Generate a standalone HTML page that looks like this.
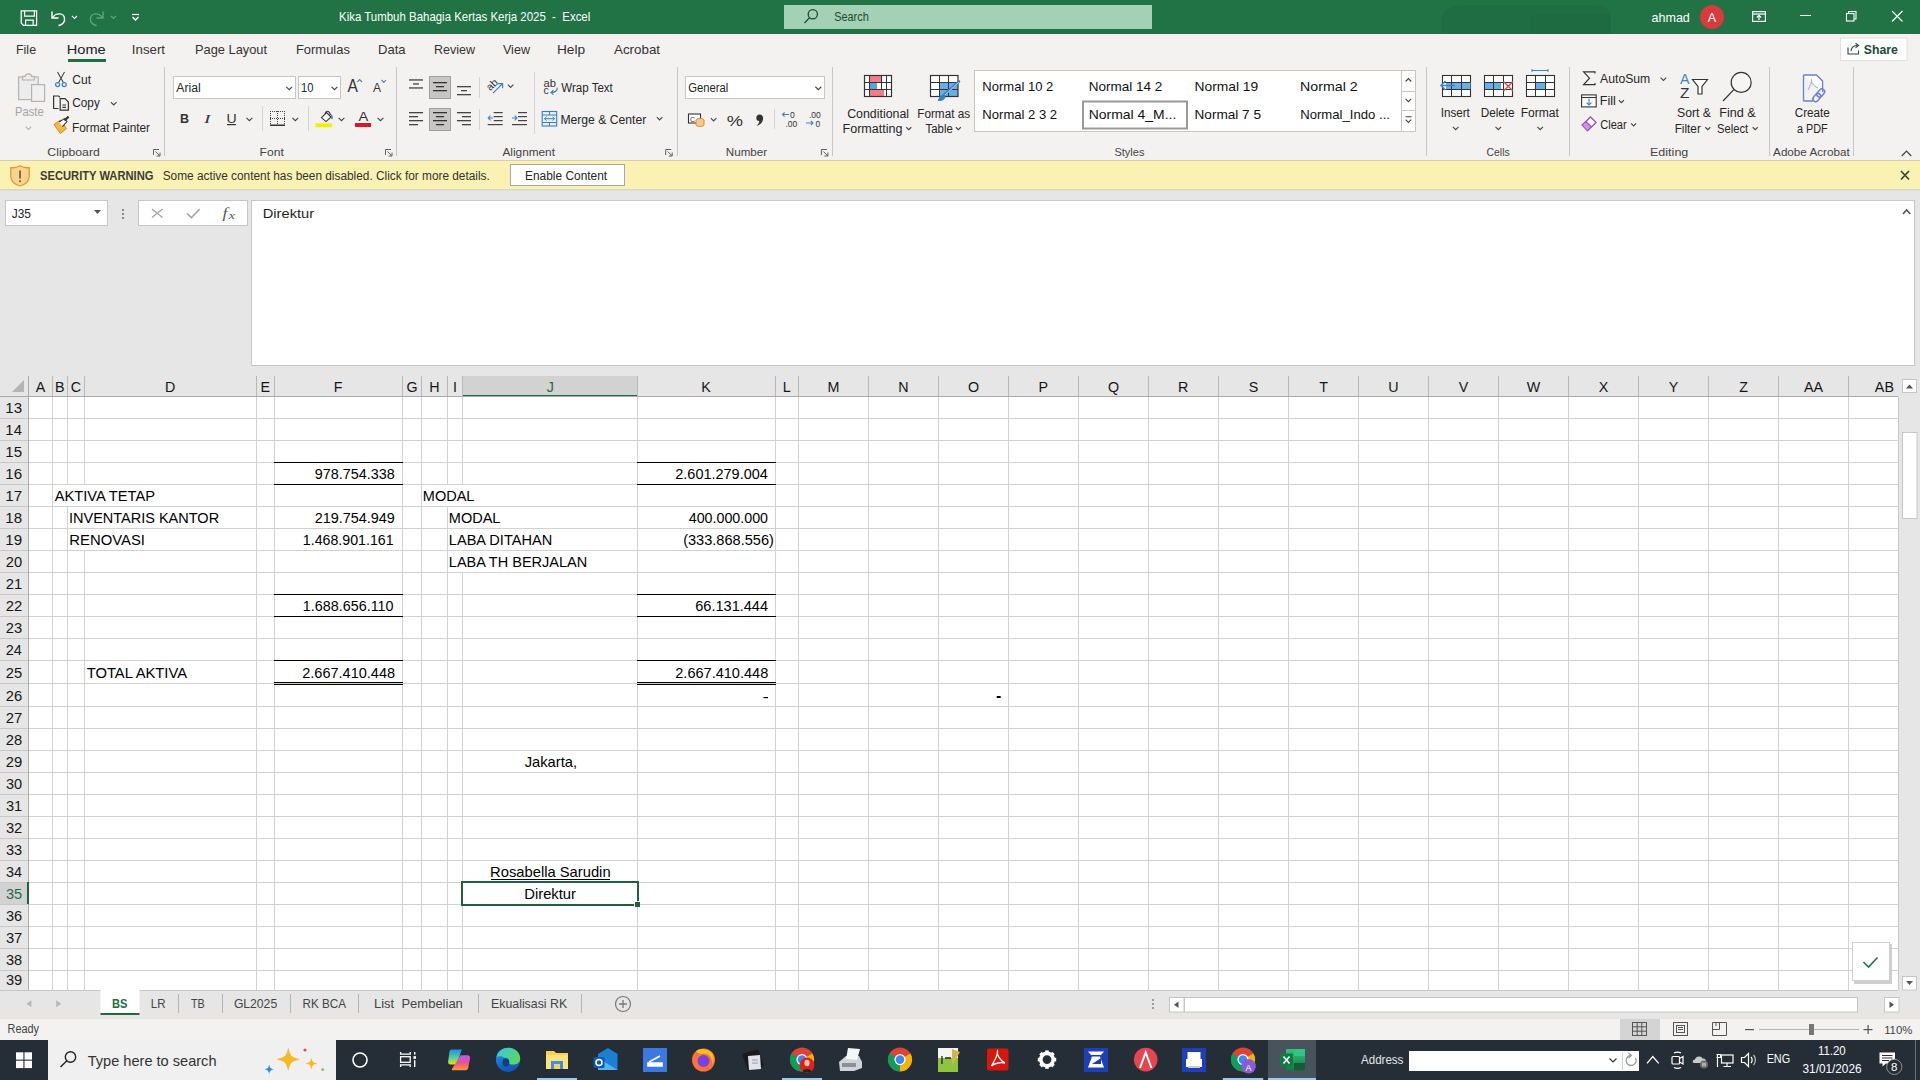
<!DOCTYPE html>
<html><head><meta charset="utf-8"><title>Excel</title>
<style>html,body{margin:0;padding:0;width:1920px;height:1080px;overflow:hidden;background:#fff}svg{display:block}text{white-space:pre}</style>
</head><body>
<svg width="1920" height="1080" viewBox="0 0 1920 1080">
<rect x="0" y="0" width="1920" height="34" fill="#217346" />
<rect x="0" y="34" width="1920" height="126" fill="#f3f2f1" />
<rect x="0" y="160" width="1920" height="29" fill="#faf2b2" />
<rect x="0" y="189" width="1920" height="187" fill="#e6e6e6" />
<g fill="none" stroke="#fff" stroke-width="1.25"><path d="M21.2 10.8 H36.6 V25.3 H23.4 L21.2 23.1 Z"/><path d="M24.6 10.8 V16.2 H34.4 V10.8"/><path d="M25.6 25.3 V20.1 H33.2 V25.3"/></g>
<g fill="none" stroke="#fff" stroke-width="1.4" stroke-linecap="round"><path d="M52 12 V18 H58"/><path d="M52.5 17.5 C56 12.5 64 12.5 64.5 18.5 C65 22 62 24.5 59 25.5"/></g>
<path d="M72 16 L74.5 18.5 L77 16" fill="none" stroke="#fff" stroke-width="1.2"/>
<g fill="none" stroke="#5fa37c" stroke-width="1.4" stroke-linecap="round"><path d="M103 12 V18 H97"/><path d="M102.5 17.5 C99 12.5 91 12.5 90.5 18.5 C90 22 93 24.5 96 25.5"/></g>
<path d="M111 16 L113.5 18.5 L116 16" fill="none" stroke="#5fa37c" stroke-width="1.2"/>
<path d="M132 14.5 H139" stroke="#fff" stroke-width="1.2"/><path d="M132.5 17 L135.5 20 L138.5 17" fill="none" stroke="#fff" stroke-width="1.3"/>
<text x="339.08" y="20.5" fill="#ffffff" style="font-family:'Liberation Sans',sans-serif;font-size:13.5px" textLength="251.18" lengthAdjust="spacingAndGlyphs">Kika Tumbuh Bahagia Kertas Kerja 2025  -  Excel</text>
<rect x="784" y="5" width="368" height="24" fill="#a2d1b5" />
<g fill="none" stroke="#1d4a30" stroke-width="1.3"><circle cx="812.8" cy="14.2" r="4.6"/><path d="M809.6 17.6 L804.5 23"/></g>
<text x="834.21" y="20.8" fill="#1d4a30" style="font-family:'Liberation Sans',sans-serif;font-size:13.3px" textLength="34.54" lengthAdjust="spacingAndGlyphs">Search</text>
<text x="1651.50" y="22" fill="#ffffff" style="font-family:'Liberation Sans',sans-serif;font-size:13.5px" textLength="38.35" lengthAdjust="spacingAndGlyphs">ahmad</text>
<circle cx="1712" cy="17" r="12" fill="#d83b3b"/>
<text x="1707.84" y="22" fill="#ffffff" style="font-family:'Liberation Sans',sans-serif;font-size:12.5px">A</text>
<g fill="none" stroke="#fff" stroke-width="1.2"><rect x="1752.6" y="11.6" width="12.8" height="9.8"/><path d="M1752.6 14 H1765.4"/><path d="M1759 20 V15.5 M1756.8 17.5 L1759 15.3 L1761.2 17.5"/></g>
<rect x="1800" y="15" width="11" height="1" fill="#ffffff" />
<g fill="none" stroke="#fff" stroke-width="1.1"><rect x="1846.5" y="13.5" width="7.5" height="7.5"/><path d="M1848.5 13.5 V11.5 H1856 V19 H1854"/></g>
<path d="M1892 11 L1902.5 21.5 M1902.5 11 L1892 21.5" stroke="#fff" stroke-width="1.2"/>
<path d="M1441 34 V22 C1441 10 1450 5 1464 5 H1598 C1606 5 1611 10 1611 18 V34 Z" fill="#000" fill-opacity="0.035"/>
<path d="M1530 34 V20 C1530 16 1533 14 1537 14 H1611 V34 Z" fill="#000" fill-opacity="0.025"/>
<text x="16.00" y="54" fill="#333333" style="font-family:'Liberation Sans',sans-serif;font-size:12.8px" textLength="20.07" lengthAdjust="spacingAndGlyphs">File</text>
<text x="66.83" y="54" fill="#202020" style="font-family:'Liberation Sans',sans-serif;font-size:12.8px" textLength="38.86" lengthAdjust="spacingAndGlyphs">Home</text>
<text x="131.80" y="54" fill="#333333" style="font-family:'Liberation Sans',sans-serif;font-size:12.8px" textLength="33.28" lengthAdjust="spacingAndGlyphs">Insert</text>
<text x="194.97" y="54" fill="#333333" style="font-family:'Liberation Sans',sans-serif;font-size:12.8px" textLength="72.10" lengthAdjust="spacingAndGlyphs">Page Layout</text>
<text x="295.96" y="54" fill="#333333" style="font-family:'Liberation Sans',sans-serif;font-size:12.8px" textLength="53.96" lengthAdjust="spacingAndGlyphs">Formulas</text>
<text x="377.96" y="54" fill="#333333" style="font-family:'Liberation Sans',sans-serif;font-size:12.8px" textLength="27.57" lengthAdjust="spacingAndGlyphs">Data</text>
<text x="434.00" y="54" fill="#333333" style="font-family:'Liberation Sans',sans-serif;font-size:12.8px" textLength="40.99" lengthAdjust="spacingAndGlyphs">Review</text>
<text x="502.94" y="54" fill="#333333" style="font-family:'Liberation Sans',sans-serif;font-size:12.8px" textLength="27.06" lengthAdjust="spacingAndGlyphs">View</text>
<text x="556.90" y="54" fill="#333333" style="font-family:'Liberation Sans',sans-serif;font-size:12.8px" textLength="28.17" lengthAdjust="spacingAndGlyphs">Help</text>
<text x="614.00" y="54" fill="#333333" style="font-family:'Liberation Sans',sans-serif;font-size:12.8px" textLength="46.09" lengthAdjust="spacingAndGlyphs">Acrobat</text>
<rect x="68" y="59" width="38" height="3" fill="#1e6e42" />
<rect x="1840.5" y="38" width="66.5" height="22.5" fill="#fdfdfd" stroke="#e1dfdd" stroke-width="1"/>
<g fill="none" stroke="#2b4a3c" stroke-width="1.1"><path d="M1848 47.5 V54 H1858.5 V50.5"/><path d="M1851 51 C1851.5 47 1854 45.5 1857.5 45.5"/><path d="M1855.5 43.3 L1858.6 45.5 L1855.5 47.8"/></g>
<text x="1863.83" y="53.7" fill="#234a3b" style="font-family:'Liberation Sans',sans-serif;font-size:12.6px;font-weight:700" textLength="34.13" lengthAdjust="spacingAndGlyphs">Share</text>
<rect x="164" y="67" width="1" height="89" fill="#c8c6c4" />
<rect x="396" y="67" width="1" height="89" fill="#c8c6c4" />
<rect x="677" y="67" width="1" height="89" fill="#c8c6c4" />
<rect x="832" y="67" width="1" height="89" fill="#c8c6c4" />
<rect x="1426" y="67" width="1" height="89" fill="#c8c6c4" />
<rect x="1569" y="67" width="1" height="89" fill="#c8c6c4" />
<rect x="1769" y="67" width="1" height="89" fill="#c8c6c4" />
<rect x="1853" y="67" width="1" height="89" fill="#c8c6c4" />
<g stroke="#b3b3b3" stroke-width="1.2" fill="#ececec"><rect x="18.6" y="77" width="19.6" height="22.6"/><path d="M22.6 80 V76.4 H25.2 C25.6 73 31.2 73 31.6 76.4 H34.2 V80 Z"/><rect x="31.6" y="84.6" width="13" height="16.8" fill="#f0f0f0"/></g>
<text x="15.00" y="116.4" fill="#a6a6a6" style="font-family:'Liberation Sans',sans-serif;font-size:12.3px" textLength="28.73" lengthAdjust="spacingAndGlyphs">Paste</text>
<path d="M25.60 126.60 L28.40 129.40 L31.20 126.60" fill="none" stroke="#b0b0b0" stroke-width="1.1"/>
<g fill="none" stroke="#444" stroke-width="1.1"><path d="M57.5 72 L63.4 82.5 M64.5 72 L58.6 82.5"/></g><g fill="none" stroke="#3a87c8" stroke-width="1.3"><circle cx="57.6" cy="84.6" r="2"/><circle cx="64.2" cy="84.6" r="2"/></g>
<text x="72.30" y="83.6" fill="#262626" style="font-family:'Liberation Sans',sans-serif;font-size:12.3px" textLength="18.67" lengthAdjust="spacingAndGlyphs">Cut</text>
<g fill="none" stroke="#333" stroke-width="1.2"><path d="M58.5 108.5 H53.6 V96 H58.6 L60 97.4"/><path d="M60.2 98.6 H65 L68.4 102 V110.2 H60.2 Z"/><path d="M62.4 105 H66 M62.4 107.4 H66"/></g>
<text x="72.31" y="107.4" fill="#262626" style="font-family:'Liberation Sans',sans-serif;font-size:12.3px" textLength="27.48" lengthAdjust="spacingAndGlyphs">Copy</text>
<path d="M110.90 102.10 L113.70 104.90 L116.50 102.10" fill="none" stroke="#444" stroke-width="1.1"/>
<path d="M54 124.6 L60.5 120 L66.5 128.5 L60.4 133.6 Z" fill="#f2b84a" stroke="#d48a1a" stroke-width="1"/><path d="M59 122 L64.5 118.6 L67 121.5 L62.4 126.6" fill="#fff" stroke="#333" stroke-width="1.1"/><path d="M64.5 120.5 L68.6 116.6" stroke="#333" stroke-width="2.2"/>
<text x="71.96" y="131.6" fill="#262626" style="font-family:'Liberation Sans',sans-serif;font-size:12.3px" textLength="78.06" lengthAdjust="spacingAndGlyphs">Format Painter</text>
<text x="47.39" y="156" fill="#444444" style="font-family:'Liberation Sans',sans-serif;font-size:11.8px" textLength="52.41" lengthAdjust="spacingAndGlyphs">Clipboard</text>
<g fill="none" stroke="#605e5c" stroke-width="1"><path d="M153.5 155 V149.5 H159"/><path d="M155.5 151.5 L160 156 M160 152.5 V156 H156.5"/></g>
<rect x="173.5" y="76.5" width="122" height="22" fill="#ffffff" stroke="#c8c6c4" stroke-width="1"/>
<text x="176.30" y="92" fill="#262626" style="font-family:'Liberation Sans',sans-serif;font-size:12.3px" textLength="24.40" lengthAdjust="spacingAndGlyphs">Arial</text>
<path d="M286.30 86.85 L289.20 89.75 L292.10 86.85" fill="none" stroke="#444" stroke-width="1.1"/>
<rect x="298.5" y="76.5" width="42" height="22" fill="#ffffff" stroke="#c8c6c4" stroke-width="1"/>
<text x="300.96" y="92" fill="#262626" style="font-family:'Liberation Sans',sans-serif;font-size:12.3px" textLength="12.46" lengthAdjust="spacingAndGlyphs">10</text>
<path d="M331.60 86.85 L334.50 89.75 L337.40 86.85" fill="none" stroke="#444" stroke-width="1.1"/>
<text x="347.40" y="91.7" fill="#333" style="font-family:'Liberation Sans',sans-serif;font-size:17.5px" textLength="10.43" lengthAdjust="spacingAndGlyphs">A</text>
<path d="M357.3 82 L359.6 79.6 L362 82" fill="none" stroke="#3a87c8" stroke-width="1.1"/>
<text x="373.00" y="91.7" fill="#333" style="font-family:'Liberation Sans',sans-serif;font-size:13.3px" textLength="8.02" lengthAdjust="spacingAndGlyphs">A</text>
<path d="M381.5 80 L383.8 82.4 L386 80" fill="none" stroke="#3a87c8" stroke-width="1.1"/>
<text x="179.89" y="123" fill="#333" style="font-family:'Liberation Sans',sans-serif;font-size:13.5px;font-weight:700" textLength="9.00" lengthAdjust="spacingAndGlyphs">B</text>
<text x="204.10" y="123" fill="#333" style="font-family:'Liberation Serif',serif;font-size:13.5px;font-style:italic" textLength="6.48" lengthAdjust="spacingAndGlyphs">I</text>
<text x="226.55" y="123" fill="#333" style="font-family:'Liberation Sans',sans-serif;font-size:12.5px" textLength="10.14" lengthAdjust="spacingAndGlyphs">U</text>
<rect x="227" y="124" width="9" height="1.2" fill="#333" />
<path d="M246.50 117.85 L249.40 120.75 L252.30 117.85" fill="none" stroke="#444" stroke-width="1.1"/>
<rect x="262" y="106" width="1" height="25" fill="#d6d4d2" />
<g stroke="#444" stroke-width="1" stroke-dasharray="1 1" fill="none" shape-rendering="crispEdges"><path d="M270 111.5 H285 M270.5 111 V125 M284.5 111 V125 M277.5 111 V125 M270 118.5 H285"/></g>
<rect x="270" y="124.5" width="15" height="1.5" fill="#333" />
<path d="M292.40 117.85 L295.30 120.75 L298.20 117.85" fill="none" stroke="#444" stroke-width="1.1"/>
<rect x="308" y="106" width="1" height="25" fill="#d6d4d2" />
<path d="M321.5 117.6 L326.6 112.5 L331 117 L326 121.6 Z" fill="#fff" stroke="#333" stroke-width="1.1"/><path d="M325 113.6 C326 110.5 328.5 110.5 329.8 113 L330.5 115" fill="none" stroke="#333" stroke-width="1.1"/><path d="M331 114.5 C332.6 116.5 332.5 118 331.5 119" fill="none" stroke="#2f6fb5" stroke-width="1.2"/>
<rect x="315.5" y="123.3" width="16.5" height="4" fill="#f0f000" />
<path d="M338.60 117.85 L341.50 120.75 L344.40 117.85" fill="none" stroke="#444" stroke-width="1.1"/>
<text x="358.40" y="121" fill="#333" style="font-family:'Liberation Sans',sans-serif;font-size:13px" textLength="9.83" lengthAdjust="spacingAndGlyphs">A</text>
<rect x="355" y="123" width="16" height="4" fill="#d71920" />
<path d="M377.60 117.85 L380.50 120.75 L383.40 117.85" fill="none" stroke="#444" stroke-width="1.1"/>
<text x="259.53" y="156" fill="#444444" style="font-family:'Liberation Sans',sans-serif;font-size:11.8px" textLength="24.24" lengthAdjust="spacingAndGlyphs">Font</text>
<g fill="none" stroke="#605e5c" stroke-width="1"><path d="M385.5 155 V149.5 H391"/><path d="M387.5 151.5 L392 156 M392 152.5 V156 H388.5"/></g>
<rect x="409" y="79.3" width="14" height="1.3" fill="#444" />
<rect x="413" y="83.3" width="6" height="1.3" fill="#444" />
<rect x="409" y="87.3" width="14" height="1.3" fill="#444" />
<rect x="429.5" y="76.5" width="21" height="22" fill="#c8c6c4" stroke="#a19f9d" stroke-width="1"/>
<rect x="433" y="82" width="14" height="1.3" fill="#333" />
<rect x="436" y="86" width="8" height="1.3" fill="#333" />
<rect x="433" y="90" width="14" height="1.3" fill="#333" />
<rect x="457" y="86" width="14" height="1.3" fill="#444" />
<rect x="461" y="90" width="6" height="1.3" fill="#444" />
<rect x="457" y="94" width="14" height="1.3" fill="#444" />
<rect x="409" y="112" width="14" height="1.3" fill="#444" />
<rect x="409" y="116" width="9" height="1.3" fill="#444" />
<rect x="409" y="120" width="14" height="1.3" fill="#444" />
<rect x="409" y="124" width="9" height="1.3" fill="#444" />
<rect x="429.5" y="108.5" width="21" height="22" fill="#c8c6c4" stroke="#a19f9d" stroke-width="1"/>
<rect x="433" y="112" width="14" height="1.3" fill="#333" />
<rect x="436" y="116" width="8" height="1.3" fill="#333" />
<rect x="433" y="120" width="14" height="1.3" fill="#333" />
<rect x="436" y="124" width="8" height="1.3" fill="#333" />
<rect x="457" y="112" width="14" height="1.3" fill="#444" />
<rect x="462" y="116" width="9" height="1.3" fill="#444" />
<rect x="457" y="120" width="14" height="1.3" fill="#444" />
<rect x="462" y="124" width="9" height="1.3" fill="#444" />
<rect x="479" y="77" width="1" height="21" fill="#d6d4d2" />
<rect x="479" y="109" width="1" height="21" fill="#d6d4d2" />
<text transform="translate(490.3 91.3) rotate(-45)" style="font-family:'Liberation Sans';font-size:10.5px" fill="#333">ab</text><path d="M493 93.2 L502.6 83.6 M498 83.6 H502.6 V88.2" fill="none" stroke="#3a7fc0" stroke-width="1.2"/>
<path d="M507.85 84.62 L510.60 87.38 L513.35 84.62" fill="none" stroke="#444" stroke-width="1.1"/>
<rect x="493.7" y="112" width="9" height="1.2" fill="#444" />
<rect x="493.7" y="116" width="9" height="1.2" fill="#444" />
<rect x="493.7" y="120" width="9" height="1.2" fill="#444" />
<rect x="487.7" y="124" width="15" height="1.2" fill="#444" />
<path d="M493.2 118 H488.2 M490.5 115.6 L488.2 118 L490.5 120.4" fill="none" stroke="#3a87c8" stroke-width="1.1"/>
<rect x="518" y="112" width="9" height="1.2" fill="#444" />
<rect x="518" y="116" width="9" height="1.2" fill="#444" />
<rect x="518" y="120" width="9" height="1.2" fill="#444" />
<rect x="512" y="124" width="15" height="1.2" fill="#444" />
<path d="M512 118 H517 M514.7 115.6 L517 118 L514.7 120.4" fill="none" stroke="#3a87c8" stroke-width="1.1"/>
<rect x="534" y="72" width="1" height="62" fill="#d6d4d2" />
<text x="543.6" y="86.6" style="font-family:'Liberation Sans';font-size:10.5px" fill="#333" textLength="12.4" lengthAdjust="spacingAndGlyphs">ab</text><text x="543.6" y="93.8" style="font-family:'Liberation Sans';font-size:10.5px" fill="#333">c</text><path d="M557.2 87.6 C557.6 91 555 92.6 551.2 92.4 M553.4 90.2 L551 92.4 L553.4 94.6" fill="none" stroke="#3a7fc0" stroke-width="1.2"/>
<text x="561.34" y="91.9" fill="#262626" style="font-family:'Liberation Sans',sans-serif;font-size:12.3px" textLength="51.47" lengthAdjust="spacingAndGlyphs">Wrap Text</text>
<g fill="#e8f1fa" stroke="#3a7fc0" stroke-width="1.1"><rect x="542.2" y="111.5" width="14.5" height="14.5"/></g><path d="M542.2 115 H556.7 M542.2 122.5 H556.7 M549.5 111.5 V115 M549.5 122.5 V126" stroke="#3a7fc0" stroke-width="1"/><path d="M544.5 118.7 H554.5 M546.5 116.8 L544.5 118.7 L546.5 120.6 M552.5 116.8 L554.5 118.7 L552.5 120.6" fill="none" stroke="#3a7fc0" stroke-width="1"/>
<text x="560.43" y="123.7" fill="#262626" style="font-family:'Liberation Sans',sans-serif;font-size:12.3px" textLength="85.80" lengthAdjust="spacingAndGlyphs">Merge &amp; Center</text>
<path d="M656.85 117.12 L659.60 119.88 L662.35 117.12" fill="none" stroke="#444" stroke-width="1.1"/>
<text x="502.50" y="156" fill="#444444" style="font-family:'Liberation Sans',sans-serif;font-size:11.8px">Alignment</text>
<g fill="none" stroke="#605e5c" stroke-width="1"><path d="M665.7 155 V149.5 H671.2"/><path d="M667.7 151.5 L672.2 156 M672.2 152.5 V156 H668.7"/></g>
<rect x="685.5" y="76.5" width="139" height="22" fill="#ffffff" stroke="#c8c6c4" stroke-width="1"/>
<text x="688.14" y="91.8" fill="#262626" style="font-family:'Liberation Sans',sans-serif;font-size:12.3px" textLength="40.13" lengthAdjust="spacingAndGlyphs">General</text>
<path d="M815.40 86.75 L818.30 89.65 L821.20 86.75" fill="none" stroke="#444" stroke-width="1.1"/>
<rect x="688.5" y="114" width="12" height="9" fill="#fff" stroke="#333" stroke-width="1.1"/><text x="690" y="121.5" style="font-family:'Liberation Sans';font-size:7px" fill="#333">C</text><ellipse cx="700" cy="120" rx="4" ry="1.6" fill="#f6c88a" stroke="#d9822b" stroke-width="0.9"/><path d="M696 120 V125 C696 127 704 127 704 125 V120" fill="#f6c88a" stroke="#d9822b" stroke-width="0.9"/>
<path d="M710.85 118.12 L713.60 120.88 L716.35 118.12" fill="none" stroke="#444" stroke-width="1.1"/>
<text x="726.86" y="125.8" fill="#333" style="font-family:'Liberation Sans',sans-serif;font-size:15px" textLength="16.26" lengthAdjust="spacingAndGlyphs">%</text>
<path d="M759.5 114.5 C762 114.5 763.5 116.3 763 119.5 C762.5 122.5 760 125 756.5 126 C758.6 124 759.4 122.6 759.2 121 C757.3 121 756.3 119.7 756.3 118 C756.3 116 757.6 114.5 759.5 114.5 Z" fill="#333"/>
<rect x="774" y="109" width="1" height="20" fill="#d6d4d2" />
<g fill="#333" style="font-family:'Liberation Sans';font-size:8.5px"><text x="790" y="118">0</text><text x="785.5" y="126.5">.00</text><text x="809" y="118">.00</text><text x="815.5" y="126.5">0</text></g><path d="M789 114.5 H782.5 M784.6 112.4 L782.5 114.5 L784.6 116.6" fill="none" stroke="#3a87c8" stroke-width="1.1"/><path d="M806 123 H813 M810.9 120.9 L813 123 L810.9 125.1" fill="none" stroke="#3a87c8" stroke-width="1.1"/>
<text x="725.77" y="156" fill="#444444" style="font-family:'Liberation Sans',sans-serif;font-size:11.8px" textLength="41.43" lengthAdjust="spacingAndGlyphs">Number</text>
<g fill="none" stroke="#605e5c" stroke-width="1"><path d="M821.4 155 V149.5 H826.9"/><path d="M823.4 151.5 L827.9 156 M827.9 152.5 V156 H824.4"/></g>
<rect x="864.5" y="75.5" width="27" height="21" fill="#fff"/><rect x="870" y="76" width="12" height="6.5" fill="#f47c86"/><rect x="870" y="82.5" width="7" height="7" fill="#5aa1e0"/><rect x="870" y="89.5" width="14" height="6.6" fill="#f47c86"/><path d="M864.5 82.5 H891.5 M864.5 89.5 H891.5 M869.5 75.5 V96.5 M881.5 75.5 V89.5 M886.5 75.5 V96.5" stroke="#333" stroke-width="1"/><rect x="864.5" y="75.5" width="27" height="21" fill="none" stroke="#333" stroke-width="1.2"/>
<text x="847.18" y="117.5" fill="#262626" style="font-family:'Liberation Sans',sans-serif;font-size:12.3px" textLength="61.87" lengthAdjust="spacingAndGlyphs">Conditional</text>
<text x="842.50" y="133.3" fill="#262626" style="font-family:'Liberation Sans',sans-serif;font-size:12.3px" textLength="59.91" lengthAdjust="spacingAndGlyphs">Formatting</text>
<path d="M906.30 127.25 L908.80 129.75 L911.30 127.25" fill="none" stroke="#444" stroke-width="1.1"/>
<rect x="930.5" y="75.5" width="27.5" height="21" fill="#fff"/><rect x="939.5" y="82.5" width="18.5" height="14" fill="#6aaee8"/><path d="M930.5 82.5 H958 M930.5 89.5 H958 M939.5 75.5 V96.5 M948.5 75.5 V96.5" stroke="#333" stroke-width="1"/><rect x="930.5" y="75.5" width="27.5" height="21" fill="none" stroke="#333" stroke-width="1.2"/><path d="M944 95 L959 81.5" stroke="#3a7fc0" stroke-width="2.6" stroke-linecap="round"/><path d="M944.4 95.5 L958.6 82.5" stroke="#f3f2f1" stroke-width="0.8"/><path d="M937.8 100.8 C939 96.5 941.5 94 944.5 94.5 C946 96 945.5 99 943 100.3 C941.5 101 939.5 101.2 937.8 100.8 Z" fill="#3a7fc0"/>
<text x="917.26" y="117.5" fill="#262626" style="font-family:'Liberation Sans',sans-serif;font-size:12.3px" textLength="52.86" lengthAdjust="spacingAndGlyphs">Format as</text>
<text x="925.57" y="133.3" fill="#262626" style="font-family:'Liberation Sans',sans-serif;font-size:12.3px" textLength="27.25" lengthAdjust="spacingAndGlyphs">Table</text>
<path d="M955.80 127.25 L958.30 129.75 L960.80 127.25" fill="none" stroke="#444" stroke-width="1.1"/>
<rect x="974.5" y="70.5" width="427" height="61" fill="#ffffff" stroke="#c8c6c4" stroke-width="1"/>
<rect x="1401.5" y="70.5" width="14" height="61" fill="#ffffff" stroke="#c8c6c4" stroke-width="1"/>
<rect x="1401" y="91" width="14" height="1" fill="#c8c6c4" />
<rect x="1401" y="110" width="14" height="1" fill="#c8c6c4" />
<path d="M1405.6 81.5 L1408.4 78.5 L1411.2 81.5" fill="none" stroke="#444" stroke-width="1.1"/>
<path d="M1405.60 98.90 L1408.40 101.70 L1411.20 98.90" fill="none" stroke="#444" stroke-width="1.1"/>
<rect x="1405.5" y="116.2" width="6" height="1" fill="#444" />
<path d="M1405.60 119.60 L1408.40 122.40 L1411.20 119.60" fill="none" stroke="#444" stroke-width="1.1"/>
<text x="982.36" y="90.9" fill="#111" style="font-family:'Liberation Sans',sans-serif;font-size:13.6px" textLength="70.92" lengthAdjust="spacingAndGlyphs">Normal 10 2</text>
<text x="1088.72" y="90.9" fill="#111" style="font-family:'Liberation Sans',sans-serif;font-size:13.6px" textLength="73.58" lengthAdjust="spacingAndGlyphs">Normal 14 2</text>
<text x="1194.50" y="90.9" fill="#111" style="font-family:'Liberation Sans',sans-serif;font-size:13.6px" textLength="63.67" lengthAdjust="spacingAndGlyphs">Normal 19</text>
<text x="1300.12" y="90.9" fill="#111" style="font-family:'Liberation Sans',sans-serif;font-size:13.6px" textLength="57.52" lengthAdjust="spacingAndGlyphs">Normal 2</text>
<text x="982.35" y="118.7" fill="#111" style="font-family:'Liberation Sans',sans-serif;font-size:13.6px" textLength="74.80" lengthAdjust="spacingAndGlyphs">Normal 2 3 2</text>
<text x="1088.68" y="118.7" fill="#111" style="font-family:'Liberation Sans',sans-serif;font-size:13.6px" textLength="87.63" lengthAdjust="spacingAndGlyphs">Normal 4_M...</text>
<text x="1194.51" y="118.7" fill="#111" style="font-family:'Liberation Sans',sans-serif;font-size:13.6px">Normal 7 5</text>
<text x="1300.20" y="118.7" fill="#111" style="font-family:'Liberation Sans',sans-serif;font-size:13.6px" textLength="89.75" lengthAdjust="spacingAndGlyphs">Normal_Indo ...</text>
<rect x="1083" y="101.5" width="104" height="27" fill="none" stroke="#9a9a9a" stroke-width="2"/>
<text x="1114.51" y="156" fill="#444444" style="font-family:'Liberation Sans',sans-serif;font-size:11.8px" textLength="29.86" lengthAdjust="spacingAndGlyphs">Styles</text>
<rect x="1442.5" y="75.5" width="28" height="21" fill="#fff" stroke="#333" stroke-width="1.1"/>
<rect x="1446" y="82" width="24.5" height="7" fill="#6aaee8"/>
<path d="M1451.5 75.5 V96.5 M1461.5 75.5 V96.5 M1442.5 82.5 H1470.5 M1442.5 89.5 H1470.5" stroke="#333" stroke-width="1"/>
<path d="M1441 85.5 H1455 M1445.5 81 L1441 85.5 L1445.5 90" fill="none" stroke="#3a87c8" stroke-width="1.5"/>
<text x="1440.65" y="116.8" fill="#262626" style="font-family:'Liberation Sans',sans-serif;font-size:12.3px" textLength="29.22" lengthAdjust="spacingAndGlyphs">Insert</text>
<path d="M1452.90 126.90 L1455.70 129.70 L1458.50 126.90" fill="none" stroke="#444" stroke-width="1.1"/>
<rect x="1484.5" y="75.5" width="28" height="21" fill="#fff" stroke="#333" stroke-width="1.1"/>
<rect x="1485" y="82" width="16" height="7" fill="#6aaee8"/>
<path d="M1493.5 75.5 V96.5 M1503.5 75.5 V96.5 M1484.5 82.5 H1512.5 M1484.5 89.5 H1512.5" stroke="#333" stroke-width="1"/>
<path d="M1503.5 81.5 L1513 91 M1513 81.5 L1503.5 91" stroke="#e04848" stroke-width="1.3"/>
<text x="1480.66" y="116.8" fill="#262626" style="font-family:'Liberation Sans',sans-serif;font-size:12.3px" textLength="33.98" lengthAdjust="spacingAndGlyphs">Delete</text>
<path d="M1495.50 126.90 L1498.30 129.70 L1501.10 126.90" fill="none" stroke="#444" stroke-width="1.1"/>
<rect x="1526.5" y="75.5" width="28" height="21" fill="#fff" stroke="#333" stroke-width="1.1"/>
<rect x="1536" y="82" width="9" height="7" fill="#6aaee8"/>
<path d="M1535.5 75.5 V96.5 M1545.5 75.5 V96.5 M1526.5 82.5 H1554.5 M1526.5 89.5 H1554.5" stroke="#333" stroke-width="1"/>
<path d="M1532 70.5 H1548 M1532 69 V72 M1548 69 V72" stroke="#3a87c8" stroke-width="1"/>
<text x="1520.63" y="116.8" fill="#262626" style="font-family:'Liberation Sans',sans-serif;font-size:12.3px" textLength="38.25" lengthAdjust="spacingAndGlyphs">Format</text>
<path d="M1537.40 126.90 L1540.20 129.70 L1543.00 126.90" fill="none" stroke="#444" stroke-width="1.1"/>
<text x="1486.48" y="156" fill="#444444" style="font-family:'Liberation Sans',sans-serif;font-size:11.8px" textLength="23.27" lengthAdjust="spacingAndGlyphs">Cells</text>
<path d="M1595 73.5 V71.8 H1583.6 L1589.5 78.2 L1583.6 84.6 H1595 V83" fill="none" stroke="#333" stroke-width="1.2"/>
<text x="1600.10" y="82.9" fill="#262626" style="font-family:'Liberation Sans',sans-serif;font-size:12.3px" textLength="50.17" lengthAdjust="spacingAndGlyphs">AutoSum</text>
<path d="M1660.60 77.60 L1663.40 80.40 L1666.20 77.60" fill="none" stroke="#444" stroke-width="1.1"/>
<rect x="1581.6" y="94.9" width="14.6" height="12" fill="#fff" stroke="#333" stroke-width="1.1"/><path d="M1581.6 97.5 H1596.2" stroke="#333" stroke-width="1"/><path d="M1589 98.5 V105 M1586.5 102.6 L1589 105 L1591.5 102.6" fill="none" stroke="#3a87c8" stroke-width="1.1"/>
<text x="1599.79" y="105.3" fill="#262626" style="font-family:'Liberation Sans',sans-serif;font-size:12.3px" textLength="16.05" lengthAdjust="spacingAndGlyphs">Fill</text>
<path d="M1618.90 100.25 L1621.40 102.75 L1623.90 100.25" fill="none" stroke="#444" stroke-width="1.1"/>
<path d="M1582 125 L1590.5 117 L1596 122.5 L1587.5 131 Z" fill="#c894e0" stroke="#9b4dca" stroke-width="1.1"/><path d="M1586 121.5 L1591.5 127" stroke="#9b4dca" stroke-width="1"/><path d="M1590.5 117 L1596 122.5 L1591.5 127 L1586 121.5 Z" fill="#fff" stroke="#9b4dca" stroke-width="1.1"/>
<text x="1600.25" y="128.6" fill="#262626" style="font-family:'Liberation Sans',sans-serif;font-size:12.3px" textLength="26.47" lengthAdjust="spacingAndGlyphs">Clear</text>
<path d="M1631.10 123.35 L1633.60 125.85 L1636.10 123.35" fill="none" stroke="#444" stroke-width="1.1"/>
<text x="1680.00" y="84.2" fill="#3a87c8" style="font-family:'Liberation Sans',sans-serif;font-size:15.5px" textLength="9.53" lengthAdjust="spacingAndGlyphs">A</text>
<text x="1680.04" y="98.4" fill="#333" style="font-family:'Liberation Sans',sans-serif;font-size:15.5px">Z</text>
<path d="M1692.5 79.5 H1707.5 L1702 86.5 V94 H1698 V86.5 Z" fill="#fff" stroke="#333" stroke-width="1.2"/>
<text x="1677.05" y="116.7" fill="#262626" style="font-family:'Liberation Sans',sans-serif;font-size:12.3px" textLength="33.98" lengthAdjust="spacingAndGlyphs">Sort &amp;</text>
<text x="1674.66" y="132.6" fill="#262626" style="font-family:'Liberation Sans',sans-serif;font-size:12.3px" textLength="26.14" lengthAdjust="spacingAndGlyphs">Filter</text>
<path d="M1705.30 127.25 L1707.80 129.75 L1710.30 127.25" fill="none" stroke="#444" stroke-width="1.1"/>
<circle cx="1741.2" cy="82.4" r="10" fill="#f6f5f4" stroke="#333" stroke-width="1.2"/><path d="M1733.8 89.6 L1723 101" stroke="#333" stroke-width="1.2"/>
<text x="1719.29" y="116.7" fill="#262626" style="font-family:'Liberation Sans',sans-serif;font-size:12.3px" textLength="36.40" lengthAdjust="spacingAndGlyphs">Find &amp;</text>
<text x="1717.00" y="132.6" fill="#262626" style="font-family:'Liberation Sans',sans-serif;font-size:12.3px" textLength="31.11" lengthAdjust="spacingAndGlyphs">Select</text>
<path d="M1752.70 127.25 L1755.20 129.75 L1757.70 127.25" fill="none" stroke="#444" stroke-width="1.1"/>
<text x="1650.00" y="156" fill="#444444" style="font-family:'Liberation Sans',sans-serif;font-size:11.8px" textLength="38.35" lengthAdjust="spacingAndGlyphs">Editing</text>
<path d="M1803.5 75 H1816.5 L1822.6 81 V92 M1813 101 H1803.5 Z" fill="#fff" stroke="#6a7fd0" stroke-width="1.3"/><path d="M1803.5 75 V101" stroke="#6a7fd0" stroke-width="1.3"/><path d="M1808 90 C1810 86 1812 82 1811.5 79.5 C1811 82 1813 86 1818 88" fill="none" stroke="#a0a8d8" stroke-width="1"/><g fill="none" stroke="#6a7fd0" stroke-width="1.5"><rect x="1818" y="88.5" width="5.5" height="9" rx="2.7" transform="rotate(40 1820.7 93)"/><rect x="1814" y="93" width="5.5" height="9" rx="2.7" transform="rotate(40 1816.7 97.5)"/></g>
<text x="1794.82" y="116.7" fill="#262626" style="font-family:'Liberation Sans',sans-serif;font-size:12.3px" textLength="35.03" lengthAdjust="spacingAndGlyphs">Create</text>
<text x="1796.97" y="132.6" fill="#262626" style="font-family:'Liberation Sans',sans-serif;font-size:12.3px" textLength="30.66" lengthAdjust="spacingAndGlyphs">a PDF</text>
<text x="1773.10" y="156" fill="#444444" style="font-family:'Liberation Sans',sans-serif;font-size:11.8px" textLength="76.57" lengthAdjust="spacingAndGlyphs">Adobe Acrobat</text>
<path d="M1901.7 156 L1906.5 151 L1911.2 156" fill="none" stroke="#444" stroke-width="1.2"/>
<rect x="0" y="160" width="1920" height="1" fill="#d9d1a3" />
<rect x="0" y="189" width="1920" height="1" fill="#d9d6c4" />
<rect x="0" y="190" width="1920" height="1" fill="#dedede" />
<path d="M20 165.8 C23 167.6 26 168 29.2 167.6 V176 C29.2 181 25 184.5 20 186 C15 184.5 10.8 181 10.8 176 V167.6 C14 168 17 167.6 20 165.8 Z" fill="#fbd38f" stroke="#e39a32" stroke-width="1.3"/><rect x="19.2" y="170.5" width="1.7" height="8" fill="#6b5a3a"/><rect x="19.2" y="180.3" width="1.7" height="1.8" fill="#6b5a3a"/>
<text x="40.06" y="179.8" fill="#3c3c3c" style="font-family:'Liberation Sans',sans-serif;font-size:12.3px;font-weight:700" textLength="113.35" lengthAdjust="spacingAndGlyphs">SECURITY WARNING</text>
<text x="162.67" y="179.8" fill="#333333" style="font-family:'Liberation Sans',sans-serif;font-size:12.3px" textLength="327.16" lengthAdjust="spacingAndGlyphs">Some active content has been disabled. Click for more details.</text>
<rect x="510.5" y="164.5" width="114" height="21" fill="#ffffff" stroke="#a8a8a8" stroke-width="1"/>
<text x="525.05" y="180" fill="#262626" style="font-family:'Liberation Sans',sans-serif;font-size:12.3px" textLength="82.06" lengthAdjust="spacingAndGlyphs">Enable Content</text>
<path d="M1901 171 L1909 179.5 M1909 171 L1901 179.5" stroke="#444" stroke-width="1.8"/>
<rect x="5.5" y="200.5" width="102" height="25" fill="#ffffff" stroke="#c6c6c6" stroke-width="1"/>
<text x="11.72" y="218" fill="#262626" style="font-family:'Liberation Sans',sans-serif;font-size:12.8px" textLength="19.29" lengthAdjust="spacingAndGlyphs">J35</text>
<path d="M94 210 H101 L97.5 214 Z" fill="#555"/>
<rect x="122" y="209" width="2" height="2" fill="#8a8a8a" />
<rect x="122" y="213" width="2" height="2" fill="#8a8a8a" />
<rect x="122" y="217" width="2" height="2" fill="#8a8a8a" />
<rect x="138.5" y="200.5" width="109" height="25" fill="#ffffff" stroke="#c6c6c6" stroke-width="1"/>
<path d="M152 209 L162.5 217.6 M162.5 209 L152 217.6" stroke="#a6a6a6" stroke-width="1.3"/>
<path d="M187 213.5 L191.5 217.6 L199.7 209" fill="none" stroke="#a6a6a6" stroke-width="1.6"/>
<text x="222.52" y="217.6" fill="#555" style="font-family:'Liberation Serif',serif;font-size:14px;font-style:italic" textLength="4.91" lengthAdjust="spacingAndGlyphs">f</text>
<text x="228.71" y="219" fill="#555" style="font-family:'Liberation Serif',serif;font-size:10px;font-style:italic" textLength="6.31" lengthAdjust="spacingAndGlyphs">x</text>
<rect x="251.5" y="200.5" width="1663" height="165" fill="#ffffff" stroke="#c6c6c6" stroke-width="1"/>
<text x="262.73" y="218" fill="#262626" style="font-family:'Liberation Sans',sans-serif;font-size:12.8px" textLength="51.40" lengthAdjust="spacingAndGlyphs">Direktur</text>
<path d="M1903 214 L1906.6 210 L1910.3 214" fill="none" stroke="#555" stroke-width="1.6"/>
<rect x="0" y="376" width="1898" height="20" fill="#e6e6e6" />
<rect x="0" y="397" width="28" height="593" fill="#e6e6e6" />
<rect x="28" y="397" width="1870" height="593" fill="#ffffff" />
<rect x="1898" y="376" width="22" height="614" fill="#e6e6e6" />
<rect x="462" y="376" width="175" height="19" fill="#d2d2d2" />
<rect x="462" y="395" width="175" height="2" fill="#1e6b41" />
<rect x="0" y="883" width="27" height="21" fill="#d2d2d2" />
<rect x="28" y="418" width="1870" height="1" fill="#d2d2d2" />
<rect x="28" y="440" width="1870" height="1" fill="#d2d2d2" />
<rect x="28" y="462" width="1870" height="1" fill="#d2d2d2" />
<rect x="28" y="484" width="1870" height="1" fill="#d2d2d2" />
<rect x="28" y="506" width="1870" height="1" fill="#d2d2d2" />
<rect x="28" y="528" width="1870" height="1" fill="#d2d2d2" />
<rect x="28" y="550" width="1870" height="1" fill="#d2d2d2" />
<rect x="28" y="572" width="1870" height="1" fill="#d2d2d2" />
<rect x="28" y="594" width="1870" height="1" fill="#d2d2d2" />
<rect x="28" y="616" width="1870" height="1" fill="#d2d2d2" />
<rect x="28" y="638" width="1870" height="1" fill="#d2d2d2" />
<rect x="28" y="660" width="1870" height="1" fill="#d2d2d2" />
<rect x="28" y="683" width="1870" height="1" fill="#d2d2d2" />
<rect x="28" y="706" width="1870" height="1" fill="#d2d2d2" />
<rect x="28" y="728" width="1870" height="1" fill="#d2d2d2" />
<rect x="28" y="750" width="1870" height="1" fill="#d2d2d2" />
<rect x="28" y="772" width="1870" height="1" fill="#d2d2d2" />
<rect x="28" y="794" width="1870" height="1" fill="#d2d2d2" />
<rect x="28" y="816" width="1870" height="1" fill="#d2d2d2" />
<rect x="28" y="838" width="1870" height="1" fill="#d2d2d2" />
<rect x="28" y="860" width="1870" height="1" fill="#d2d2d2" />
<rect x="28" y="882" width="1870" height="1" fill="#d2d2d2" />
<rect x="28" y="904" width="1870" height="1" fill="#d2d2d2" />
<rect x="28" y="926" width="1870" height="1" fill="#d2d2d2" />
<rect x="28" y="948" width="1870" height="1" fill="#d2d2d2" />
<rect x="28" y="970" width="1870" height="1" fill="#d2d2d2" />
<rect x="52" y="397" width="1" height="593" fill="#d2d2d2" />
<rect x="67" y="397" width="1" height="87" fill="#d2d2d2" />
<rect x="67" y="507" width="1" height="483" fill="#d2d2d2" />
<rect x="84" y="397" width="1" height="87" fill="#d2d2d2" />
<rect x="84" y="551" width="1" height="439" fill="#d2d2d2" />
<rect x="256" y="397" width="1" height="593" fill="#d2d2d2" />
<rect x="274" y="397" width="1" height="593" fill="#d2d2d2" />
<rect x="402" y="397" width="1" height="593" fill="#d2d2d2" />
<rect x="421" y="397" width="1" height="593" fill="#d2d2d2" />
<rect x="447" y="397" width="1" height="87" fill="#d2d2d2" />
<rect x="447" y="507" width="1" height="483" fill="#d2d2d2" />
<rect x="462" y="397" width="1" height="87" fill="#d2d2d2" />
<rect x="462" y="573" width="1" height="417" fill="#d2d2d2" />
<rect x="637" y="397" width="1" height="593" fill="#d2d2d2" />
<rect x="775" y="397" width="1" height="593" fill="#d2d2d2" />
<rect x="798" y="397" width="1" height="593" fill="#d2d2d2" />
<rect x="868" y="397" width="1" height="593" fill="#d2d2d2" />
<rect x="938" y="397" width="1" height="593" fill="#d2d2d2" />
<rect x="1008" y="397" width="1" height="593" fill="#d2d2d2" />
<rect x="1078" y="397" width="1" height="593" fill="#d2d2d2" />
<rect x="1148" y="397" width="1" height="593" fill="#d2d2d2" />
<rect x="1218" y="397" width="1" height="593" fill="#d2d2d2" />
<rect x="1288" y="397" width="1" height="593" fill="#d2d2d2" />
<rect x="1358" y="397" width="1" height="593" fill="#d2d2d2" />
<rect x="1428" y="397" width="1" height="593" fill="#d2d2d2" />
<rect x="1498" y="397" width="1" height="593" fill="#d2d2d2" />
<rect x="1568" y="397" width="1" height="593" fill="#d2d2d2" />
<rect x="1638" y="397" width="1" height="593" fill="#d2d2d2" />
<rect x="1708" y="397" width="1" height="593" fill="#d2d2d2" />
<rect x="1778" y="397" width="1" height="593" fill="#d2d2d2" />
<rect x="1848" y="397" width="1" height="593" fill="#d2d2d2" />
<rect x="52" y="376" width="1" height="20" fill="#b8b8b8" />
<rect x="67" y="376" width="1" height="20" fill="#b8b8b8" />
<rect x="84" y="376" width="1" height="20" fill="#b8b8b8" />
<rect x="256" y="376" width="1" height="20" fill="#b8b8b8" />
<rect x="274" y="376" width="1" height="20" fill="#b8b8b8" />
<rect x="402" y="376" width="1" height="20" fill="#b8b8b8" />
<rect x="421" y="376" width="1" height="20" fill="#b8b8b8" />
<rect x="447" y="376" width="1" height="20" fill="#b8b8b8" />
<rect x="462" y="376" width="1" height="20" fill="#b8b8b8" />
<rect x="637" y="376" width="1" height="20" fill="#b8b8b8" />
<rect x="775" y="376" width="1" height="20" fill="#b8b8b8" />
<rect x="798" y="376" width="1" height="20" fill="#b8b8b8" />
<rect x="868" y="376" width="1" height="20" fill="#b8b8b8" />
<rect x="938" y="376" width="1" height="20" fill="#b8b8b8" />
<rect x="1008" y="376" width="1" height="20" fill="#b8b8b8" />
<rect x="1078" y="376" width="1" height="20" fill="#b8b8b8" />
<rect x="1148" y="376" width="1" height="20" fill="#b8b8b8" />
<rect x="1218" y="376" width="1" height="20" fill="#b8b8b8" />
<rect x="1288" y="376" width="1" height="20" fill="#b8b8b8" />
<rect x="1358" y="376" width="1" height="20" fill="#b8b8b8" />
<rect x="1428" y="376" width="1" height="20" fill="#b8b8b8" />
<rect x="1498" y="376" width="1" height="20" fill="#b8b8b8" />
<rect x="1568" y="376" width="1" height="20" fill="#b8b8b8" />
<rect x="1638" y="376" width="1" height="20" fill="#b8b8b8" />
<rect x="1708" y="376" width="1" height="20" fill="#b8b8b8" />
<rect x="1778" y="376" width="1" height="20" fill="#b8b8b8" />
<rect x="1848" y="376" width="1" height="20" fill="#b8b8b8" />
<rect x="0" y="396" width="1898" height="1" fill="#ababab" />
<rect x="28" y="376" width="1" height="614" fill="#ababab" />
<rect x="0" y="418" width="28" height="1" fill="#c8c8c8" />
<rect x="0" y="440" width="28" height="1" fill="#c8c8c8" />
<rect x="0" y="462" width="28" height="1" fill="#c8c8c8" />
<rect x="0" y="484" width="28" height="1" fill="#c8c8c8" />
<rect x="0" y="506" width="28" height="1" fill="#c8c8c8" />
<rect x="0" y="528" width="28" height="1" fill="#c8c8c8" />
<rect x="0" y="550" width="28" height="1" fill="#c8c8c8" />
<rect x="0" y="572" width="28" height="1" fill="#c8c8c8" />
<rect x="0" y="594" width="28" height="1" fill="#c8c8c8" />
<rect x="0" y="616" width="28" height="1" fill="#c8c8c8" />
<rect x="0" y="638" width="28" height="1" fill="#c8c8c8" />
<rect x="0" y="660" width="28" height="1" fill="#c8c8c8" />
<rect x="0" y="683" width="28" height="1" fill="#c8c8c8" />
<rect x="0" y="706" width="28" height="1" fill="#c8c8c8" />
<rect x="0" y="728" width="28" height="1" fill="#c8c8c8" />
<rect x="0" y="750" width="28" height="1" fill="#c8c8c8" />
<rect x="0" y="772" width="28" height="1" fill="#c8c8c8" />
<rect x="0" y="794" width="28" height="1" fill="#c8c8c8" />
<rect x="0" y="816" width="28" height="1" fill="#c8c8c8" />
<rect x="0" y="838" width="28" height="1" fill="#c8c8c8" />
<rect x="0" y="860" width="28" height="1" fill="#c8c8c8" />
<rect x="0" y="882" width="28" height="1" fill="#c8c8c8" />
<rect x="0" y="904" width="28" height="1" fill="#c8c8c8" />
<rect x="0" y="926" width="28" height="1" fill="#c8c8c8" />
<rect x="0" y="948" width="28" height="1" fill="#c8c8c8" />
<rect x="0" y="970" width="28" height="1" fill="#c8c8c8" />
<path d="M24 380 L24 392 L12 392 Z" fill="#b4b4b4"/>
<text x="35.75" y="392" fill="#161616" style="font-family:'Liberation Sans',sans-serif;font-size:14.3px">A</text>
<text x="55.03" y="392" fill="#161616" style="font-family:'Liberation Sans',sans-serif;font-size:14.3px">B</text>
<text x="70.74" y="392" fill="#161616" style="font-family:'Liberation Sans',sans-serif;font-size:14.3px">C</text>
<text x="165.10" y="392" fill="#161616" style="font-family:'Liberation Sans',sans-serif;font-size:14.3px">D</text>
<text x="260.46" y="392" fill="#161616" style="font-family:'Liberation Sans',sans-serif;font-size:14.3px">E</text>
<text x="333.85" y="392" fill="#161616" style="font-family:'Liberation Sans',sans-serif;font-size:14.3px">F</text>
<text x="406.60" y="392" fill="#161616" style="font-family:'Liberation Sans',sans-serif;font-size:14.3px">G</text>
<text x="429.35" y="392" fill="#161616" style="font-family:'Liberation Sans',sans-serif;font-size:14.3px">H</text>
<text x="453.03" y="392" fill="#161616" style="font-family:'Liberation Sans',sans-serif;font-size:14.3px">I</text>
<text x="546.85" y="392" fill="#1e6b41" style="font-family:'Liberation Sans',sans-serif;font-size:14.3px">J</text>
<text x="701.24" y="392" fill="#161616" style="font-family:'Liberation Sans',sans-serif;font-size:14.3px">K</text>
<text x="782.67" y="392" fill="#161616" style="font-family:'Liberation Sans',sans-serif;font-size:14.3px">L</text>
<text x="827.57" y="392" fill="#161616" style="font-family:'Liberation Sans',sans-serif;font-size:14.3px">M</text>
<text x="898.35" y="392" fill="#161616" style="font-family:'Liberation Sans',sans-serif;font-size:14.3px">N</text>
<text x="967.96" y="392" fill="#161616" style="font-family:'Liberation Sans',sans-serif;font-size:14.3px">O</text>
<text x="1038.53" y="392" fill="#161616" style="font-family:'Liberation Sans',sans-serif;font-size:14.3px">P</text>
<text x="1107.96" y="392" fill="#161616" style="font-family:'Liberation Sans',sans-serif;font-size:14.3px">Q</text>
<text x="1178.10" y="392" fill="#161616" style="font-family:'Liberation Sans',sans-serif;font-size:14.3px">R</text>
<text x="1248.75" y="392" fill="#161616" style="font-family:'Liberation Sans',sans-serif;font-size:14.3px">S</text>
<text x="1319.14" y="392" fill="#161616" style="font-family:'Liberation Sans',sans-serif;font-size:14.3px">T</text>
<text x="1388.35" y="392" fill="#161616" style="font-family:'Liberation Sans',sans-serif;font-size:14.3px">U</text>
<text x="1458.75" y="392" fill="#161616" style="font-family:'Liberation Sans',sans-serif;font-size:14.3px">V</text>
<text x="1526.74" y="392" fill="#161616" style="font-family:'Liberation Sans',sans-serif;font-size:14.3px">W</text>
<text x="1598.71" y="392" fill="#161616" style="font-family:'Liberation Sans',sans-serif;font-size:14.3px">X</text>
<text x="1668.71" y="392" fill="#161616" style="font-family:'Liberation Sans',sans-serif;font-size:14.3px">Y</text>
<text x="1739.14" y="392" fill="#161616" style="font-family:'Liberation Sans',sans-serif;font-size:14.3px">Z</text>
<text x="1803.99" y="392" fill="#161616" style="font-family:'Liberation Sans',sans-serif;font-size:14.3px">AA</text>
<text x="1874.85" y="392" fill="#161616" style="font-family:'Liberation Sans',sans-serif;font-size:14.3px">AB</text>
<text x="5.37" y="413" fill="#161616" style="font-family:'Liberation Sans',sans-serif;font-size:14.3px" textLength="16.77" lengthAdjust="spacingAndGlyphs">13</text>
<text x="5.39" y="435" fill="#161616" style="font-family:'Liberation Sans',sans-serif;font-size:14.3px" textLength="16.52" lengthAdjust="spacingAndGlyphs">14</text>
<text x="5.37" y="457" fill="#161616" style="font-family:'Liberation Sans',sans-serif;font-size:14.3px" textLength="16.77" lengthAdjust="spacingAndGlyphs">15</text>
<text x="5.37" y="479" fill="#161616" style="font-family:'Liberation Sans',sans-serif;font-size:14.3px" textLength="16.77" lengthAdjust="spacingAndGlyphs">16</text>
<text x="5.36" y="501" fill="#161616" style="font-family:'Liberation Sans',sans-serif;font-size:14.3px" textLength="16.94" lengthAdjust="spacingAndGlyphs">17</text>
<text x="5.37" y="523" fill="#161616" style="font-family:'Liberation Sans',sans-serif;font-size:14.3px" textLength="16.77" lengthAdjust="spacingAndGlyphs">18</text>
<text x="5.36" y="545" fill="#161616" style="font-family:'Liberation Sans',sans-serif;font-size:14.3px" textLength="16.85" lengthAdjust="spacingAndGlyphs">19</text>
<text x="5.77" y="567" fill="#161616" style="font-family:'Liberation Sans',sans-serif;font-size:14.3px" textLength="16.28" lengthAdjust="spacingAndGlyphs">20</text>
<text x="5.76" y="589" fill="#161616" style="font-family:'Liberation Sans',sans-serif;font-size:14.3px" textLength="16.44" lengthAdjust="spacingAndGlyphs">21</text>
<text x="5.76" y="611" fill="#161616" style="font-family:'Liberation Sans',sans-serif;font-size:14.3px" textLength="16.52" lengthAdjust="spacingAndGlyphs">22</text>
<text x="5.76" y="633" fill="#161616" style="font-family:'Liberation Sans',sans-serif;font-size:14.3px" textLength="16.36" lengthAdjust="spacingAndGlyphs">23</text>
<text x="5.78" y="655" fill="#161616" style="font-family:'Liberation Sans',sans-serif;font-size:14.3px" textLength="16.12" lengthAdjust="spacingAndGlyphs">24</text>
<text x="5.76" y="678" fill="#161616" style="font-family:'Liberation Sans',sans-serif;font-size:14.3px" textLength="16.36" lengthAdjust="spacingAndGlyphs">25</text>
<text x="5.76" y="701" fill="#161616" style="font-family:'Liberation Sans',sans-serif;font-size:14.3px" textLength="16.36" lengthAdjust="spacingAndGlyphs">26</text>
<text x="5.76" y="723" fill="#161616" style="font-family:'Liberation Sans',sans-serif;font-size:14.3px" textLength="16.52" lengthAdjust="spacingAndGlyphs">27</text>
<text x="5.76" y="745" fill="#161616" style="font-family:'Liberation Sans',sans-serif;font-size:14.3px" textLength="16.36" lengthAdjust="spacingAndGlyphs">28</text>
<text x="5.76" y="767" fill="#161616" style="font-family:'Liberation Sans',sans-serif;font-size:14.3px" textLength="16.44" lengthAdjust="spacingAndGlyphs">29</text>
<text x="5.92" y="789" fill="#161616" style="font-family:'Liberation Sans',sans-serif;font-size:14.3px" textLength="16.12" lengthAdjust="spacingAndGlyphs">30</text>
<text x="5.91" y="811" fill="#161616" style="font-family:'Liberation Sans',sans-serif;font-size:14.3px" textLength="16.28" lengthAdjust="spacingAndGlyphs">31</text>
<text x="5.91" y="833" fill="#161616" style="font-family:'Liberation Sans',sans-serif;font-size:14.3px" textLength="16.36" lengthAdjust="spacingAndGlyphs">32</text>
<text x="5.92" y="855" fill="#161616" style="font-family:'Liberation Sans',sans-serif;font-size:14.3px" textLength="16.20" lengthAdjust="spacingAndGlyphs">33</text>
<text x="5.93" y="877" fill="#161616" style="font-family:'Liberation Sans',sans-serif;font-size:14.3px" textLength="15.97" lengthAdjust="spacingAndGlyphs">34</text>
<text x="5.92" y="899" fill="#1e6b41" style="font-family:'Liberation Sans',sans-serif;font-size:14.3px" textLength="16.20" lengthAdjust="spacingAndGlyphs">35</text>
<text x="5.92" y="921" fill="#161616" style="font-family:'Liberation Sans',sans-serif;font-size:14.3px" textLength="16.20" lengthAdjust="spacingAndGlyphs">36</text>
<text x="5.91" y="943" fill="#161616" style="font-family:'Liberation Sans',sans-serif;font-size:14.3px" textLength="16.36" lengthAdjust="spacingAndGlyphs">37</text>
<text x="5.92" y="965" fill="#161616" style="font-family:'Liberation Sans',sans-serif;font-size:14.3px" textLength="16.20" lengthAdjust="spacingAndGlyphs">38</text>
<text x="5.91" y="985" fill="#161616" style="font-family:'Liberation Sans',sans-serif;font-size:14.3px" textLength="16.28" lengthAdjust="spacingAndGlyphs">39</text>
<rect x="274" y="462" width="129" height="1" fill="#000000" />
<rect x="274" y="484" width="129" height="1" fill="#000000" />
<rect x="274" y="594" width="129" height="1" fill="#000000" />
<rect x="274" y="616" width="129" height="1" fill="#000000" />
<rect x="274" y="660" width="129" height="1" fill="#000000" />
<rect x="274" y="682" width="129" height="1" fill="#000000" />
<rect x="274" y="684" width="129" height="1" fill="#000000" />
<rect x="637" y="462" width="139" height="1" fill="#000000" />
<rect x="637" y="484" width="139" height="1" fill="#000000" />
<rect x="637" y="594" width="139" height="1" fill="#000000" />
<rect x="637" y="616" width="139" height="1" fill="#000000" />
<rect x="637" y="660" width="139" height="1" fill="#000000" />
<rect x="637" y="682" width="139" height="1" fill="#000000" />
<rect x="637" y="684" width="139" height="1" fill="#000000" />
<text x="314.85" y="479" fill="#000" style="font-family:'Liberation Sans',sans-serif;font-size:15px" textLength="79.94" lengthAdjust="spacingAndGlyphs">978.754.338</text>
<text x="675.28" y="479" fill="#000" style="font-family:'Liberation Sans',sans-serif;font-size:15px" textLength="92.59" lengthAdjust="spacingAndGlyphs">2.601.279.004</text>
<text x="54.80" y="501" fill="#000" style="font-family:'Liberation Sans',sans-serif;font-size:15px" textLength="100.14" lengthAdjust="spacingAndGlyphs">AKTIVA TETAP</text>
<text x="422.84" y="501" fill="#000" style="font-family:'Liberation Sans',sans-serif;font-size:15px" textLength="51.61" lengthAdjust="spacingAndGlyphs">MODAL</text>
<text x="69.00" y="523" fill="#000" style="font-family:'Liberation Sans',sans-serif;font-size:15px" textLength="150.11" lengthAdjust="spacingAndGlyphs">INVENTARIS KANTOR</text>
<text x="314.78" y="523" fill="#000" style="font-family:'Liberation Sans',sans-serif;font-size:15px" textLength="80.08" lengthAdjust="spacingAndGlyphs">219.754.949</text>
<text x="448.84" y="523" fill="#000" style="font-family:'Liberation Sans',sans-serif;font-size:15px" textLength="51.61" lengthAdjust="spacingAndGlyphs">MODAL</text>
<text x="688.71" y="523" fill="#000" style="font-family:'Liberation Sans',sans-serif;font-size:15px" textLength="79.30" lengthAdjust="spacingAndGlyphs">400.000.000</text>
<text x="69.31" y="545" fill="#000" style="font-family:'Liberation Sans',sans-serif;font-size:15px" textLength="75.68" lengthAdjust="spacingAndGlyphs">RENOVASI</text>
<text x="302.84" y="545" fill="#000" style="font-family:'Liberation Sans',sans-serif;font-size:15px" textLength="90.81" lengthAdjust="spacingAndGlyphs">1.468.901.161</text>
<text x="448.83" y="545" fill="#000" style="font-family:'Liberation Sans',sans-serif;font-size:15px" textLength="103.33" lengthAdjust="spacingAndGlyphs">LABA DITAHAN</text>
<text x="683.13" y="545" fill="#000" style="font-family:'Liberation Sans',sans-serif;font-size:15px" textLength="90.78" lengthAdjust="spacingAndGlyphs">(333.868.556)</text>
<text x="448.84" y="567" fill="#000" style="font-family:'Liberation Sans',sans-serif;font-size:15px" textLength="138.34" lengthAdjust="spacingAndGlyphs">LABA TH BERJALAN</text>
<text x="302.82" y="611" fill="#000" style="font-family:'Liberation Sans',sans-serif;font-size:15px" textLength="90.69" lengthAdjust="spacingAndGlyphs">1.688.656.110</text>
<text x="695.27" y="611" fill="#000" style="font-family:'Liberation Sans',sans-serif;font-size:15px" textLength="72.79" lengthAdjust="spacingAndGlyphs">66.131.444</text>
<text x="86.70" y="678" fill="#000" style="font-family:'Liberation Sans',sans-serif;font-size:15px" textLength="100.35" lengthAdjust="spacingAndGlyphs">TOTAL AKTIVA</text>
<text x="302.27" y="678" fill="#000" style="font-family:'Liberation Sans',sans-serif;font-size:15px" textLength="92.81" lengthAdjust="spacingAndGlyphs">2.667.410.448</text>
<text x="675.27" y="678" fill="#000" style="font-family:'Liberation Sans',sans-serif;font-size:15px" textLength="93.01" lengthAdjust="spacingAndGlyphs">2.667.410.448</text>
<rect x="763.5" y="697" width="4.5" height="1.2" fill="#000" />
<rect x="996.7" y="696" width="4" height="2" fill="#000" />
<text x="524.78" y="767" fill="#000" style="font-family:'Liberation Sans',sans-serif;font-size:15px" textLength="52.20" lengthAdjust="spacingAndGlyphs">Jakarta,</text>
<text x="490.07" y="877" fill="#000" style="font-family:'Liberation Sans',sans-serif;font-size:15px" textLength="120.52" lengthAdjust="spacingAndGlyphs">Rosabella Sarudin</text>
<rect x="491" y="879" width="119" height="1" fill="#000" />
<text x="524.22" y="899" fill="#000" style="font-family:'Liberation Sans',sans-serif;font-size:15px" textLength="51.82" lengthAdjust="spacingAndGlyphs">Direktur</text>
<rect x="461" y="881" width="178" height="2" fill="#1f6140" />
<rect x="461" y="904" width="173" height="2" fill="#1f6140" />
<rect x="461" y="881" width="2" height="25" fill="#1f6140" />
<rect x="637" y="881" width="2" height="20" fill="#1f6140" />
<rect x="635" y="902" width="5" height="5" fill="#1f6140" />
<rect x="27" y="882" width="2" height="22" fill="#1f6140" />
<rect x="1898" y="397" width="1" height="593" fill="#c8c8c8" />
<rect x="0" y="990" width="1920" height="28" fill="#e6e6e6" />
<rect x="0" y="990" width="1898" height="1" fill="#c6c6c6" />
<rect x="0" y="1018" width="1920" height="1" fill="#d4d4d4" />
<path d="M31.4 1000.2 V1007.3 L26.4 1003.75 Z" fill="#b8b8b8"/><path d="M56.2 1000.2 V1007.3 L61.2 1003.75 Z" fill="#b8b8b8"/>
<rect x="100.5" y="990" width="39" height="23" fill="#ffffff" />
<rect x="100.5" y="1013" width="39" height="2" fill="#1e6b41" />
<text x="111.98" y="1007.7" fill="#1e6b41" style="font-family:'Liberation Sans',sans-serif;font-size:12.8px;font-weight:700" textLength="15.46" lengthAdjust="spacingAndGlyphs">BS</text>
<text x="150.78" y="1007.7" fill="#444444" style="font-family:'Liberation Sans',sans-serif;font-size:12.8px" textLength="14.67" lengthAdjust="spacingAndGlyphs">LR</text>
<text x="190.98" y="1007.7" fill="#444444" style="font-family:'Liberation Sans',sans-serif;font-size:12.8px" textLength="13.79" lengthAdjust="spacingAndGlyphs">TB</text>
<text x="233.89" y="1007.7" fill="#444444" style="font-family:'Liberation Sans',sans-serif;font-size:12.8px" textLength="43.28" lengthAdjust="spacingAndGlyphs">GL2025</text>
<text x="302.57" y="1007.7" fill="#444444" style="font-family:'Liberation Sans',sans-serif;font-size:12.8px" textLength="43.47" lengthAdjust="spacingAndGlyphs">RK BCA</text>
<text x="373.96" y="1007.7" fill="#444444" style="font-family:'Liberation Sans',sans-serif;font-size:12.8px" textLength="88.91" lengthAdjust="spacingAndGlyphs">List  Pembelian</text>
<text x="491.01" y="1007.7" fill="#444444" style="font-family:'Liberation Sans',sans-serif;font-size:12.8px" textLength="76.16" lengthAdjust="spacingAndGlyphs">Ekualisasi RK</text>
<rect x="178" y="994" width="1" height="19" fill="#b4b4b4" />
<rect x="222" y="994" width="1" height="19" fill="#b4b4b4" />
<rect x="290" y="994" width="1" height="19" fill="#b4b4b4" />
<rect x="358" y="994" width="1" height="19" fill="#b4b4b4" />
<rect x="478" y="994" width="1" height="19" fill="#b4b4b4" />
<rect x="581" y="994" width="1" height="19" fill="#b4b4b4" />
<circle cx="623" cy="1004" r="7.5" fill="none" stroke="#777" stroke-width="1.2"/><path d="M619 1004 H627 M623 1000 V1008" stroke="#777" stroke-width="1.3"/>
<rect x="1152" y="999" width="2" height="2" fill="#9a9a9a" />
<rect x="1152" y="1003" width="2" height="2" fill="#9a9a9a" />
<rect x="1152" y="1007" width="2" height="2" fill="#9a9a9a" />
<rect x="1169.5" y="997.5" width="14.5" height="14.5" fill="#ffffff" stroke="#c6c6c6" stroke-width="1"/>
<path d="M1174 1004.75 L1178.5 1001.5 V1008 Z" fill="#555"/>
<rect x="1184.5" y="997.5" width="673" height="14.5" fill="#ffffff" stroke="#c6c6c6" stroke-width="1"/>
<rect x="1884.5" y="997.5" width="14.5" height="14.5" fill="#ffffff" stroke="#c6c6c6" stroke-width="1"/>
<path d="M1894 1004.75 L1889.5 1001.5 V1008 Z" fill="#555"/>
<rect x="1902.5" y="379.5" width="14" height="13" fill="#ffffff" stroke="#c6c6c6" stroke-width="1"/>
<path d="M1906 388.5 L1909.5 384.5 L1913 388.5 Z" fill="#555"/>
<rect x="1902.5" y="432.5" width="14.5" height="86" fill="#ffffff" stroke="#c6c6c6" stroke-width="1"/>
<rect x="1902.5" y="976.5" width="14" height="13.5" fill="#ffffff" stroke="#c6c6c6" stroke-width="1"/>
<path d="M1906 981 L1909.5 985 L1913 981 Z" fill="#555"/>
<rect x="1854" y="944" width="38" height="40" fill="#cfcfcf" />
<rect x="1852.5" y="942.5" width="37" height="38" fill="#ffffff" stroke="#d0d0d0" stroke-width="1"/>
<path d="M1863.5 962 L1868.5 967 L1877.5 957.5" fill="none" stroke="#217346" stroke-width="1.6"/>
<rect x="0" y="1018.5" width="1920" height="21.5" fill="#f3f2f1" />
<text x="7.53" y="1032.7" fill="#444444" style="font-family:'Liberation Sans',sans-serif;font-size:12.3px" textLength="31.48" lengthAdjust="spacingAndGlyphs">Ready</text>
<rect x="1620" y="1019" width="40" height="21" fill="#d4d4d4" />
<g fill="none" stroke="#555" stroke-width="1"><rect x="1632.5" y="1022.5" width="14" height="13"/><path d="M1632.5 1026.8 H1646.5 M1632.5 1031.2 H1646.5 M1637.2 1022.5 V1035.5 M1641.8 1022.5 V1035.5"/></g>
<g fill="none" stroke="#555" stroke-width="1"><rect x="1673.5" y="1022.5" width="14" height="13"/><rect x="1676.5" y="1025.5" width="8" height="7"/><path d="M1678 1027.5 H1683 M1678 1029.5 H1683"/></g>
<g fill="none" stroke="#555" stroke-width="1"><path d="M1712.5 1035.5 V1022.5 H1726.5 V1035.5 H1712.5 M1712.5 1029.5 H1719.5 V1022.5 M1716 1022.5 V1026"/></g>
<rect x="1745" y="1029" width="9" height="1.2" fill="#555" />
<rect x="1759" y="1029" width="100" height="1" fill="#b4b4b4" />
<rect x="1809" y="1024" width="5" height="11" fill="#777" />
<rect x="1863.5" y="1029" width="9" height="1.2" fill="#555" />
<rect x="1867.5" y="1025" width="1.2" height="9" fill="#555" />
<text x="1884.15" y="1034" fill="#444" style="font-family:'Liberation Sans',sans-serif;font-size:11.8px" textLength="28.23" lengthAdjust="spacingAndGlyphs">110%</text>
<rect x="0" y="1040" width="1920" height="40" fill="#252e36" />
<g fill="#fff"><rect x="16" y="1052.3" width="7.4" height="7.3"/><rect x="24.5" y="1052.3" width="7.5" height="7.3"/><rect x="16" y="1060.7" width="7.4" height="7.4"/><rect x="24.5" y="1060.7" width="7.5" height="7.4"/></g>
<rect x="48" y="1040" width="288" height="40" fill="#f0f0f0" />
<g fill="none" stroke="#222" stroke-width="1.4"><circle cx="70.5" cy="1057" r="5.2"/><path d="M66.8 1060.8 L60.5 1067"/></g>
<text x="87.71" y="1066" fill="#333333" style="font-family:'Liberation Sans',sans-serif;font-size:14.3px" textLength="128.79" lengthAdjust="spacingAndGlyphs">Type here to search</text>
<path d="M288.3 1047.5 C290.896 1056.704 290.896 1056.704 300.1 1059.3 C290.896 1061.896 290.896 1061.896 288.3 1071.1 C285.704 1061.896 285.704 1061.896 276.5 1059.3 C285.704 1056.704 285.704 1056.704 288.3 1047.5 Z" fill="#f7b924"/><path d="M311.4 1057.8 C312.676 1062.3239999999998 312.676 1062.3239999999998 317.2 1063.6 C312.676 1064.876 312.676 1064.876 311.4 1069.3999999999999 C310.12399999999997 1064.876 310.12399999999997 1064.876 305.59999999999997 1063.6 C310.12399999999997 1062.3239999999998 310.12399999999997 1062.3239999999998 311.4 1057.8 Z" fill="#f7b924"/><path d="M269.2 1064.5 C270.256 1068.244 270.256 1068.244 274.0 1069.3 C270.256 1070.356 270.256 1070.356 269.2 1074.1 C268.144 1070.356 268.144 1070.356 264.4 1069.3 C268.144 1068.244 268.144 1068.244 269.2 1064.5 Z" fill="#2d8fd5"/><circle cx="305" cy="1050" r="1.6" fill="#e8504a"/><circle cx="322.7" cy="1069.7" r="1.4" fill="#7cc35a"/>
<circle cx="360" cy="1060" r="7" fill="none" stroke="#fff" stroke-width="1.6"/>
<g fill="none" stroke="#fff" stroke-width="1.3"><path d="M400.6 1052 V1054.2 H410.2 V1052"/><rect x="400.6" y="1056.7" width="9.6" height="5.6"/><path d="M400.6 1067 V1064.8 H410.2 V1067"/></g><rect x="414" y="1052" width="1.4" height="2.6" fill="#fff"/><rect x="413.4" y="1056.2" width="2.6" height="2.6" fill="#fff"/><rect x="414" y="1060.2" width="1.4" height="6.8" fill="#fff"/>
<defs><linearGradient id="cp" x1="0" y1="0" x2="1" y2="1"><stop offset="0" stop-color="#2fb6f0"/><stop offset="0.45" stop-color="#9bd43a"/><stop offset="0.7" stop-color="#f06a3a"/><stop offset="1" stop-color="#c452e0"/></linearGradient><linearGradient id="ed" x1="0" y1="0" x2="1" y2="1"><stop offset="0" stop-color="#39c2a0"/><stop offset="0.5" stop-color="#1f8fd8"/><stop offset="1" stop-color="#1558b0"/></linearGradient><linearGradient id="xl" x1="0" y1="0" x2="0" y2="1"><stop offset="0" stop-color="#33c481"/><stop offset="1" stop-color="#107c41"/></linearGradient></defs>
<defs><linearGradient id="cpl" x1="0" y1="0" x2="0" y2="1"><stop offset="0" stop-color="#2a8af0"/><stop offset="0.5" stop-color="#45d0a0"/><stop offset="1" stop-color="#e8e010"/></linearGradient><linearGradient id="cpr" x1="0" y1="0" x2="0" y2="1"><stop offset="0" stop-color="#b45cf0"/><stop offset="0.5" stop-color="#f0508a"/><stop offset="1" stop-color="#ff9a30"/></linearGradient></defs><path d="M451.5 1049.6 H461.8 L456.5 1064.5 H450.5 C448.6 1064.5 447.8 1063 448.2 1061 L449.5 1051.4 C449.8 1050.3 450.5 1049.6 451.5 1049.6 Z" fill="url(#cpl)"/><path d="M460.5 1055.2 H467.5 C469.5 1055.2 470.4 1056.5 470 1058.4 L468.2 1068 C467.9 1069.4 467 1070.2 465.6 1070.2 H452.6 C451.5 1070.2 451.8 1069 452.4 1068.2 Z" fill="url(#cpr)"/>
<defs><linearGradient id="edb" x1="0" y1="0" x2="0.3" y2="1"><stop offset="0" stop-color="#1c9be8"/><stop offset="1" stop-color="#1456b8"/></linearGradient><linearGradient id="edg" x1="0" y1="0" x2="1" y2="0.6"><stop offset="0" stop-color="#36c6e8"/><stop offset="1" stop-color="#5ad860"/></linearGradient></defs><circle cx="508" cy="1059.8" r="12.1" fill="url(#edb)"/><path d="M496.5 1057 C498 1050.5 503 1047.7 508.5 1047.7 C515.5 1047.7 520.2 1053 520.2 1058.5 C520.2 1062.5 517 1064.6 513.5 1064.6 C509 1064.6 506.5 1062 507 1059.5 C505 1057 500 1055 496.5 1057 Z" fill="url(#edg)"/><ellipse cx="506" cy="1062.5" rx="3.4" ry="4.2" fill="#0f3f80"/>
<path d="M546 1051 H554 L556 1053 H568 V1069 H546 Z" fill="#f9d153"/><rect x="546" y="1055" width="22" height="14" fill="#ffe27a"/><rect x="551" y="1061" width="12" height="8" fill="#3c8ee6"/><rect x="554" y="1064" width="6" height="5" fill="#f9d153"/>
<rect x="537" y="1078" width="40" height="2" fill="#9cc9ee" />
<path d="M598 1054 L608 1048 L617.5 1054 V1070 H598 Z" fill="#1c7fd6"/><path d="M598 1058 L617.5 1070 H598 Z" fill="#54b3f0"/><rect x="593.5" y="1057" width="11" height="11" rx="1.5" fill="#0f5aa8"/><circle cx="599" cy="1062.5" r="3" fill="none" stroke="#fff" stroke-width="1.5"/>
<rect x="643" y="1048" width="24" height="24" fill="#3b78e0"/><path d="M649 1062 L660 1056 M648 1063 H662 V1066 H648 Z" stroke="#fff" stroke-width="1.6" fill="#fff"/>
<circle cx="703.5" cy="1060" r="11.5" fill="#ff7139"/><circle cx="703.5" cy="1061" r="6" fill="#7542e5"/><path d="M696 1051 C700 1048 708 1048 712 1053 C714 1056 714.5 1061 712 1065 C713 1058 709 1053 703 1054 C700 1054.5 697 1053 696 1051 Z" fill="#ffbd1f"/>
<path d="M742 1054 L758 1049 L764 1066 L748 1071 Z" fill="#1a1a1a"/><path d="M748 1056 L760 1055 L761 1069 L749 1070 Z" fill="#e0e2ee"/><path d="M752 1060 H758 M752 1063 H758" stroke="#888" stroke-width="0.8"/>
<circle cx="802" cy="1059.6" r="12" fill="#db4437"/><path d="M802 1059.6 L791.6 1053.6 A12 12 0 0 0 802.0 1071.6 Z" fill="#0f9d58"/><path d="M802 1059.6 L812.4 1053.6 A12 12 0 0 1 802.0 1071.6 Z" fill="#f4b400"/><circle cx="802" cy="1059.6" r="5.6" fill="#fff"/><circle cx="802" cy="1059.6" r="4.3" fill="#4285f4"/>
<circle cx="807" cy="1065" r="7.5" fill="#e01e1e"/><ellipse cx="807" cy="1063" rx="2.6" ry="3.2" fill="#e8c8a8"/><path d="M802.5 1072 C803 1068 811 1068 811.5 1072 Z" fill="#222"/>
<rect x="782" y="1078" width="40" height="2" fill="#9cc9ee" />
<path d="M839 1062 L846 1056 H859 L862 1062 V1068 L854 1071 H840 Z" fill="#cfd4da"/><path d="M848 1048 L860 1049 L857 1060 L846 1059 Z" fill="#f4f6f8"/><rect x="842" y="1063" width="14" height="4" fill="#8a9099"/>
<circle cx="900" cy="1059.6" r="12" fill="#db4437"/><path d="M900 1059.6 L889.6 1053.6 A12 12 0 0 0 900.0 1071.6 Z" fill="#0f9d58"/><path d="M900 1059.6 L910.4 1053.6 A12 12 0 0 1 900.0 1071.6 Z" fill="#f4b400"/><circle cx="900" cy="1059.6" r="5.6" fill="#fff"/><circle cx="900" cy="1059.6" r="4.3" fill="#4285f4"/>
<rect x="938" y="1048" width="20" height="24" fill="#f4f4f0"/><rect x="938" y="1058" width="20" height="14" fill="#8cc63f"/><path d="M952 1049 L960 1052 L952 1066" fill="#d9b24a"/><path d="M942 1056 V1064 M945 1058 H951" stroke="#222" stroke-width="1.3"/>
<rect x="987" y="1048.5" width="21.5" height="22" rx="2" fill="#d7170c"/><path d="M991.5 1066 C995 1060 998 1054 997.5 1051.5 C996.5 1054 1000 1061 1005 1063 C1001 1062 995 1063 991.5 1066 Z" fill="none" stroke="#fff" stroke-width="1.4"/>
<g transform="translate(1047 1059.6)"><circle r="6.2" fill="none" stroke="#fff" stroke-width="3.6"/><rect x="-1.8" y="-9.2" width="3.6" height="4" fill="#fff" transform="rotate(0)"/><rect x="-1.8" y="-9.2" width="3.6" height="4" fill="#fff" transform="rotate(45)"/><rect x="-1.8" y="-9.2" width="3.6" height="4" fill="#fff" transform="rotate(90)"/><rect x="-1.8" y="-9.2" width="3.6" height="4" fill="#fff" transform="rotate(135)"/><rect x="-1.8" y="-9.2" width="3.6" height="4" fill="#fff" transform="rotate(180)"/><rect x="-1.8" y="-9.2" width="3.6" height="4" fill="#fff" transform="rotate(225)"/><rect x="-1.8" y="-9.2" width="3.6" height="4" fill="#fff" transform="rotate(270)"/><rect x="-1.8" y="-9.2" width="3.6" height="4" fill="#fff" transform="rotate(315)"/></g>
<rect x="1084" y="1048" width="24" height="24" fill="#1f3fb8"/><path d="M1088 1051.5 H1104 L1101 1055 H1091 Z" fill="#fff"/><path d="M1088 1067.5 L1092 1056.5 H1100 L1104 1067.5 Z" fill="#fff"/><path d="M1092 1064 L1101 1058 V1064 Z" fill="#1f3fb8"/>
<circle cx="1145.7" cy="1059.6" r="11.8" fill="#e8434f"/><path d="M1140 1068 L1145.7 1052.5 L1151.4 1068" fill="none" stroke="#fff" stroke-width="2"/>
<rect x="1182" y="1048" width="24" height="24" fill="#1f3fb8"/><rect x="1187.5" y="1052" width="13" height="7" fill="#fff"/><rect x="1186" y="1059" width="16" height="8" fill="#fff"/><rect x="1188" y="1066" width="12" height="2" fill="#ccc"/>
<circle cx="1243" cy="1059.6" r="12" fill="#db4437"/><path d="M1243 1059.6 L1232.6 1053.6 A12 12 0 0 0 1243.0 1071.6 Z" fill="#0f9d58"/><path d="M1243 1059.6 L1253.4 1053.6 A12 12 0 0 1 1243.0 1071.6 Z" fill="#f4b400"/><circle cx="1243" cy="1059.6" r="5.6" fill="#fff"/><circle cx="1243" cy="1059.6" r="4.3" fill="#4285f4"/>
<circle cx="1248.6" cy="1066.3" r="7.2" fill="#8b5bd6"/>
<text x="1245.61" y="1070.5" fill="#fff" style="font-family:'Liberation Sans',sans-serif;font-size:9px">A</text>
<rect x="1222.8" y="1078" width="40.4" height="2" fill="#9cc9ee" />
<rect x="1268" y="1040" width="48" height="40" fill="#49535c" />
<rect x="1268" y="1078" width="48" height="2" fill="#9cc9ee" />
<rect x="1286" y="1049" width="19" height="21.5" rx="1" fill="url(#xl)"/><path d="M1294 1049 H1305 V1056 H1294 Z" fill="#33c481"/><path d="M1294 1063 H1305 V1070.5 H1294 Z" fill="#185c37"/><rect x="1280" y="1053.5" width="13" height="13" rx="1" fill="#107c41"/><path d="M1283.5 1056.5 L1289.5 1063.5 M1289.5 1056.5 L1283.5 1063.5" stroke="#fff" stroke-width="1.6"/>
<text x="1361.00" y="1064.1" fill="#e6e6e6" style="font-family:'Liberation Sans',sans-serif;font-size:12.8px" textLength="42.39" lengthAdjust="spacingAndGlyphs">Address</text>
<rect x="1409" y="1051" width="230" height="20" fill="#ffffff" />
<path d="M1609.5 1058.5 L1613 1062 L1616.5 1058.5" fill="none" stroke="#333" stroke-width="1.1"/>
<rect x="1622" y="1052" width="1" height="18" fill="#d0d0d0" />
<path d="M1635.5 1058 A5 5 0 1 1 1630.5 1055.5" fill="none" stroke="#999" stroke-width="1.3"/><path d="M1628.5 1053 L1631.5 1055.5 L1628.5 1058" fill="none" stroke="#999" stroke-width="1.2"/>
<path d="M1647 1063.4 L1652.8 1056.6 L1658.7 1063.4" fill="none" stroke="#fff" stroke-width="1.3"/>
<g fill="none" stroke="#fff" stroke-width="1.2"><rect x="1672" y="1056.5" width="7.5" height="7.5" rx="1"/><path d="M1679.5 1058.5 L1683 1056.5 V1064 L1679.5 1062"/><path d="M1674 1053 C1676 1052 1679 1052 1681 1053 M1674 1067.5 C1676 1068.5 1679 1068.5 1681 1067.5"/></g>
<path d="M1694 1063 C1692 1063 1692.5 1059.5 1695 1059.5 C1695.5 1056 1701 1055.5 1702.5 1058.5 C1705.5 1058 1707 1061 1705 1063 Z" fill="#c8c8c8"/><circle cx="1704" cy="1064.5" r="4" fill="#6c6c6c"/><path d="M1703 1062.7 V1066.3 M1705 1062.7 V1066.3" stroke="#fff" stroke-width="0.9"/>
<g fill="none" stroke="#fff" stroke-width="1.2"><rect x="1721.5" y="1055" width="11.5" height="8"/><path d="M1727 1063 V1066.5 M1723.5 1066.5 H1731 M1717.5 1054.5 V1067 M1716.5 1054.5 H1720.5 V1057.5 H1716.5"/></g>
<g fill="none" stroke="#fff" stroke-width="1.2"><path d="M1741.5 1057.5 H1744.5 L1748.5 1053.5 V1066.5 L1744.5 1062.5 H1741.5 Z"/><path d="M1751 1057 C1752.5 1058.5 1752.5 1061.5 1751 1063"/><path d="M1753.5 1055 C1756 1057.5 1756 1062.5 1753.5 1065" stroke-opacity="0.7"/></g>
<text x="1766.63" y="1063.4" fill="#ffffff" style="font-family:'Liberation Sans',sans-serif;font-size:12.3px" textLength="23.55" lengthAdjust="spacingAndGlyphs">ENG</text>
<text x="1817.94" y="1054.6" fill="#ffffff" style="font-family:'Liberation Sans',sans-serif;font-size:12.3px" textLength="27.80" lengthAdjust="spacingAndGlyphs">11.20</text>
<text x="1802.53" y="1072.5" fill="#ffffff" style="font-family:'Liberation Sans',sans-serif;font-size:12.3px" textLength="59.04" lengthAdjust="spacingAndGlyphs">31/01/2026</text>
<path d="M1879.5 1052.5 H1895 V1063.5 H1886 L1882.5 1066.5 V1063.5 H1879.5 Z" fill="#fff"/><path d="M1882 1055.5 H1892.5 M1882 1058 H1892.5 M1882 1060.5 H1889" stroke="#252e36" stroke-width="1"/><circle cx="1894.3" cy="1066.9" r="7.6" fill="#252e36" stroke="#aaa" stroke-width="0.8"/>
<text x="1891.08" y="1071.3" fill="#fff" style="font-family:'Liberation Sans',sans-serif;font-size:11.5px">8</text>
<rect x="1915" y="1040" width="1" height="40" fill="#6a7178" />
</svg>
</body></html>
